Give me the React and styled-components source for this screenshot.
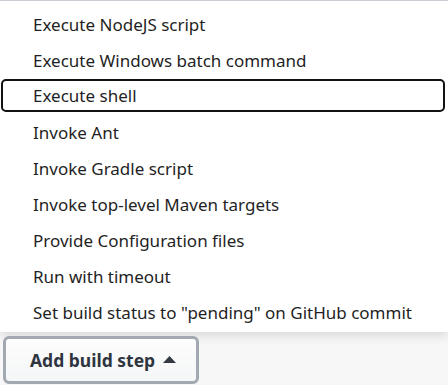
import styled, { createGlobalStyle } from "styled-components";

const Global = createGlobalStyle`
  html, body {
    margin: 0;
    padding: 0;
    background: #f7f7f8;
    font-family: "Noto Sans", "Open Sans", "DejaVu Sans", sans-serif;
  }
`;

const Page = styled.div`
  width: 448px;
  height: 385px;
  overflow: hidden;
  display: flex;
  flex-direction: column;
`;

const Menu = styled.ul`
  list-style: none;
  margin: 0;
  padding: 5px 0 2px;
  background: #fff;
  border-top: 1px solid #c9ced4;
  box-shadow: 0 4px 10px rgba(0, 0, 0, 0.12);
  display: flex;
  flex-direction: column;
`;

const Item = styled.li`
  height: 36px;
  display: flex;
  align-items: center;
  font-size: 17px;
  color: #1f1f24;
  box-sizing: border-box;
  margin: 0 3px 0 1px;
  padding-left: 30px;
  border: 2px solid ${(p) => (p.focused ? "#121212" : "transparent")};
  border-radius: 5px;
  ${(p) => p.focused && "height: 33px; margin-top: 1px; margin-bottom: 2px;"}
`;

const Footer = styled.div`
  padding: 4px 0 0 3px;
`;

const AddButton = styled.button`
  width: 196px;
  height: 48px;
  box-sizing: border-box;
  border: 3px solid #a2a9b0;
  border-radius: 6px;
  background: linear-gradient(#fdfdfd, #f5f6f7);
  display: flex;
  align-items: center;
  gap: 8px;
  padding: 0 0 0 24px;
  font-family: inherit;
  font-size: 17.5px;
  font-weight: 700;
  color: #2f3540;
`;

const Caret = styled.svg`
  width: 13px;
  height: 8px;
  fill: #333a44;
`;

const steps = [
  "Execute NodeJS script",
  "Execute Windows batch command",
  "Execute shell",
  "Invoke Ant",
  "Invoke Gradle script",
  "Invoke top-level Maven targets",
  "Provide Configuration files",
  "Run with timeout",
  'Set build status to "pending" on GitHub commit',
];

export default function App() {
  return (
    <Page>
      <Global />
      <Menu>
        {steps.map((s) => (
          <Item key={s} focused={s === "Execute shell"}>
            {s}
          </Item>
        ))}
      </Menu>
      <Footer>
        <AddButton>
          Add build step
          <Caret viewBox="0 0 13 8">
            <path d="M6.5 0 L13 7 L0 7 Z" />
          </Caret>
        </AddButton>
      </Footer>
    </Page>
  );
}
